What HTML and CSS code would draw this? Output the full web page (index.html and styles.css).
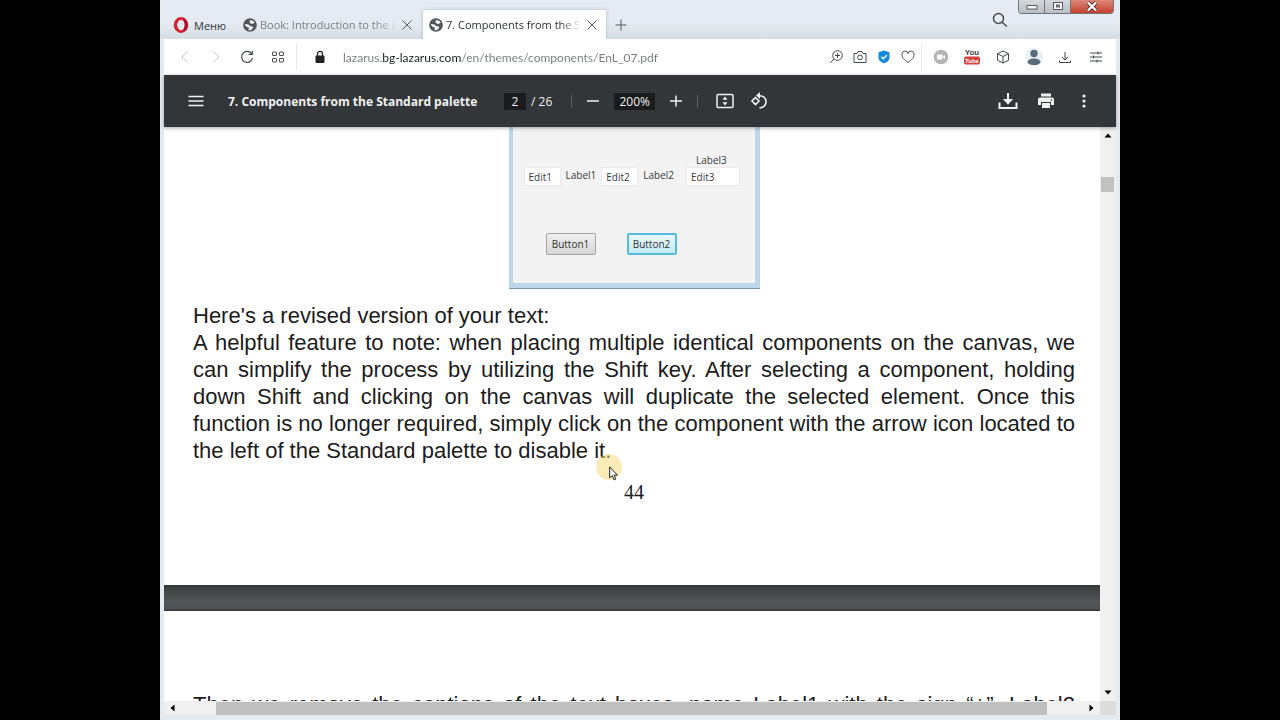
FILE: index.html
```html
<!DOCTYPE html>
<html lang="en">
<head>
  <meta charset="UTF-8">
  <meta name="viewport" content="width=device-width, initial-scale=1.0">
  <title>7. Components from the Standard palette</title>
  <link rel="stylesheet" href="styles.css">
</head>
<body>
  <div class="window">
    <header class="tab-bar">
      <button class="menu-button">
        <svg width="16" height="16" viewBox="0 0 16 16"><ellipse cx="8" cy="8" rx="5.6" ry="6.2" fill="none" stroke="#d3233a" stroke-width="3.4"/><ellipse cx="8" cy="8" rx="3.2" ry="5.2" fill="#e4ebf1"/><path d="M10 1a7 7.5 0 0 1 0 14c2-2 2.500-11 0-14z" fill="#a70f26"/></svg>
        Меню
      </button>
      <div class="tab">
        <svg class="globe" width="14" height="14" viewBox="0 0 14 14"><circle cx="7" cy="7" r="6.800" fill="#50565b"/><path d="M7 2.300c2-.6 4 .6 4.700 2.300L9.500 6 7.600 5.400 6.500 4zM2 6l3.500.5 1.800 1.700 2.400.3.500 1.200-2.400 2.500-2.600-.2 1-1.900-1.600-.8L2.500 8z" fill="#f4f6f8"/></svg>
        <a href="#" class="tab-title">Book: Introduction to the Lazarus</a>
        <button class="close" aria-label="Close tab"><svg width="10" height="10" viewBox="0 0 10 10"><path d="M.5.500l9 9M9.500.500l-9 9"/></svg></button>
      </div>
      <div class="tab active">
        <svg class="globe" width="14" height="14" viewBox="0 0 14 14"><circle cx="7" cy="7" r="6.800" fill="#50565b"/><path d="M7 2.300c2-.6 4 .6 4.700 2.300L9.500 6 7.600 5.400 6.500 4zM2 6l3.500.5 1.800 1.700 2.400.3.500 1.200-2.400 2.500-2.600-.2 1-1.900-1.600-.8L2.500 8z" fill="#fff"/></svg>
        <a href="#" class="tab-title">7. Components from the Standard</a>
        <button class="close" aria-label="Close tab"><svg width="10" height="10" viewBox="0 0 10 10"><path d="M.5.500l9 9M9.500.500l-9 9"/></svg></button>
      </div>
      <button class="new-tab" aria-label="New tab"><svg width="12" height="12" viewBox="0 0 12 12"><path d="M6 .5v11M.5 6h11"/></svg></button>
      <button class="search" aria-label="Search tabs"><svg width="16" height="16" viewBox="0 0 16 16"><circle cx="6.500" cy="6.500" r="5"/><path d="M10.200 10.200l4.600 4.300"/></svg></button>
      <div class="window-controls">
        <button aria-label="Minimize"><svg width="12" height="12" viewBox="0 0 12 12"><rect x="1" y="4.500" width="10" height="3.500" fill="#fff" stroke="#555a60"/></svg></button>
        <button aria-label="Maximize"><svg width="12" height="12" viewBox="0 0 12 12"><rect x="1.500" y="1.500" width="9" height="7" fill="#fff" stroke="#555a60"/><rect x="4.500" y="4" width="3" height="2" fill="#aaa" stroke="#555a60"/></svg></button>
        <button class="quit" aria-label="Close window"><svg width="12" height="12" viewBox="0 0 12 12"><path d="M2 1.500l8 8M10 1.500l-8 8" stroke="#5d2a28" stroke-width="4"/><path d="M2 1.500l8 8M10 1.500l-8 8" stroke="#fff" stroke-width="2.400"/></svg></button>
      </div>
    </header>

    <nav class="address-bar">
      <button class="disabled" aria-label="Back"><svg width="16" height="16" viewBox="0 0 16 16"><path d="M10.500 2.500L5 8l5.500 5.500"/></svg></button>
      <button class="disabled" aria-label="Forward"><svg width="16" height="16" viewBox="0 0 16 16"><path d="M5.500 2.500L11 8l-5.500 5.500"/></svg></button>
      <button aria-label="Reload"><svg width="16" height="16" viewBox="0 0 16 16"><path d="M12.800 5A5.500 5.500 0 1 0 13.500 9M13.300 1.800V5.500H9.500" stroke-width="1.200"/></svg></button>
      <button aria-label="Speed dial"><svg width="16" height="16" viewBox="0 0 16 16"><rect x="2.500" y="3" width="4" height="3.500" rx=".5"/><rect x="9.500" y="3" width="4" height="3.500" rx=".5"/><rect x="2.500" y="9.500" width="4" height="3.500" rx=".5"/><rect x="9.500" y="9.500" width="4" height="3.500" rx=".5"/></svg></button>
      <span class="divider"></span>
      <svg class="lock" width="12" height="14" viewBox="0 0 12 14"><path d="M3.500 6V4a2.500 2.700 0 0 1 5 0v2" stroke="#222" stroke-width="1.300" fill="none"/><rect x="1.500" y="5.500" width="9" height="7.500" rx="1" fill="#222"/></svg>
      <input class="url" type="text" aria-label="Address" value="lazarus.bg-lazarus.com/en/themes/components/EnL_07.pdf">
      <div class="page-actions">
        <button aria-label="Zoom"><svg width="16" height="16" viewBox="0 0 16 16"><circle cx="9.500" cy="6.500" r="4.800"/><path d="M6 10l-3.800 3.800M7 6.500h5M9.500 4v5"/></svg></button>
        <button aria-label="Snapshot"><svg width="16" height="16" viewBox="0 0 16 16"><path d="M2 4.500h3l1-2h4l1 2h3v9H2z"/><circle cx="8" cy="8.500" r="2.400"/></svg></button>
        <button aria-label="Ad blocker"><svg width="16" height="16" viewBox="0 0 16 16"><path d="M8 1.500l5.500 1.800V9c0 2.500-2.500 4-5.500 5.500C5 13 2.500 11.500 2.500 9V3.300z" fill="#1789dc" stroke="none"/><path d="M5.300 7.800l2 2 3.500-3.600" stroke="#fff" stroke-width="1.400"/></svg></button>
        <button aria-label="Bookmark"><svg width="16" height="16" viewBox="0 0 16 16"><path d="M8 13.500C4 10.500 2 8.500 2 5.700A3 3 0 0 1 8 4.500a3 3 0 0 1 6 1.200c0 2.800-2 4.800-6 7.800z"/></svg></button>
      </div>
      <div class="extensions">
        <button aria-label="Recorder"><svg width="16" height="16" viewBox="0 0 16 16"><circle cx="8" cy="8" r="7.300" fill="#b4b4b4" stroke="none"/><rect x="4" y="5.500" width="5.500" height="5" rx="1" fill="#fff" stroke="none"/><path d="M9.500 8L12 6v4z" fill="#fff" stroke="none"/></svg></button>
        <button aria-label="Video"><svg width="18" height="18" viewBox="0 0 18 18"><rect x="1" y="8.500" width="16" height="8" rx="2" fill="#d8403c" stroke="none"/><text class="logo-top" x="9" y="7" text-anchor="middle">You</text><text class="logo-bottom" x="9" y="15" text-anchor="middle">Tube</text></svg></button>
        <button aria-label="Extensions"><svg width="16" height="16" viewBox="0 0 16 16"><path d="M8 2l5.500 2.700v6.600L8 14l-5.500-2.700V4.700zM2.500 4.700L8 7.500l5.500-2.800M8 7.500V14"/></svg></button>
        <button aria-label="Profile"><svg width="18" height="18" viewBox="0 0 18 18"><circle cx="9" cy="9" r="9" fill="#e9f1f6" stroke="none"/><circle cx="9" cy="5.500" r="3.700" fill="#5a6b7c" stroke="none"/><path d="M2.500 14.500c0-2.500 3-4 6.500-4s6.500 1.500 6.500 4C14 16.500 12 17 9 17s-5-.5-6.500-2.500z" fill="#5a6b7c" stroke="none"/></svg></button>
        <button aria-label="Downloads"><svg width="16" height="16" viewBox="0 0 16 16"><path d="M8 3v8M5 8l3 3 3-3M2.500 11.500v2h11v-2"/></svg></button>
        <button aria-label="Easy setup"><svg width="16" height="16" viewBox="0 0 16 16"><path d="M2 4h12M2 8h12M2 12h12M10 2.500v3M5.500 6.500v3M9 10.500v3"/></svg></button>
      </div>
    </nav>

    <div class="pdf-toolbar">
      <button aria-label="Menu"><svg width="16" height="12" viewBox="0 0 16 12"><path d="M.5 1.500h15M.5 6h15M.5 10.500h15"/></svg></button>
      <h1>7. Components from the Standard palette</h1>
      <div class="pager">
        <input class="page-number" type="text" aria-label="Page number" value="2">
        <span>/ 26</span>
      </div>
      <span class="divider"></span>
      <button aria-label="Zoom out"><svg width="14" height="14" viewBox="0 0 14 14"><path d="M1 7h12"/></svg></button>
      <input class="zoom-level" type="text" aria-label="Zoom level" value="200%">
      <button aria-label="Zoom in"><svg width="14" height="14" viewBox="0 0 14 14"><path d="M1 7h12M7 1.500v11"/></svg></button>
      <span class="divider"></span>
      <div class="view-tools">
        <button aria-label="Fit to page"><svg width="18" height="16" viewBox="0 0 18 16"><rect x="1" y="1.500" width="16" height="13" rx="1"/><path d="M9 3.500L6.500 6.800h5zM9 12.500L6.500 9.200h5z" fill="#f1f1f1" stroke="none"/></svg></button>
        <button aria-label="Rotate"><svg width="18" height="18" viewBox="0 0 18 18"><path d="M5.500 5.500L9 9l-3.500 3.500L2 9zM8 3.500c5 0 8 2.500 8 6s-2.500 6-6.500 6.500" stroke-width="1.600"/><path d="M10 0v7L6 3.500z" fill="#f1f1f1" stroke="none"/></svg></button>
      </div>
      <div class="file-tools">
        <button aria-label="Download"><svg width="20" height="18" viewBox="0 0 20 18"><path d="M10 1v8M1.500 10.500v5.500h17v-5.500" stroke-width="2"/><path d="M4.800 7L10 12.500 15.200 7z" fill="#f1f1f1" stroke="none"/></svg></button>
        <button aria-label="Print"><svg width="18" height="16" viewBox="0 0 18 16"><path d="M4 .500h10v3H4zM3 4.500h12a2 2 0 0 1 2 2V12h-3V9H4v3H1V6.500a2 2 0 0 1 2-2zM5 10h8v5H5z" fill="#f1f1f1" stroke="none"/><circle cx="14.500" cy="7" r=".8" fill="#323639" stroke="none"/></svg></button>
        <button aria-label="More"><svg width="16" height="16" viewBox="0 0 16 16"><circle cx="8" cy="3" r="1.600"/><circle cx="8" cy="8" r="1.600"/><circle cx="8" cy="13" r="1.600"/></svg></button>
      </div>
    </div>

    <div class="viewer">
      <main class="pages">
        <section class="page first">
          <div class="form-preview">
            <div class="fields">
              <input class="field" type="text" aria-label="Edit1" value="Edit1">
              <label for="edit2">Label1</label>
              <input class="field" type="text" id="edit2" value="Edit2">
              <label for="edit3">Label2</label>
              <div class="stacked">
                <label for="edit3">Label3</label>
                <input class="field" type="text" id="edit3" value="Edit3">
              </div>
            </div>
            <div class="form-buttons">
              <button>Button1</button>
              <button class="focused">Button2</button>
            </div>
          </div>
          <p>Here's a revised version of your text:</p>
          <p>A helpful feature to note: when placing multiple identical components on the canvas, we can simplify the process by utilizing the Shift key. After selecting a component, holding down Shift and clicking on the canvas will duplicate the selected element. Once this function is no longer required, simply click on the component with the arrow icon located to the left of the Standard palette to disable it.</p>
          <div class="folio">44</div>
          <div class="pointer">
            <svg width="9" height="15" viewBox="0 0 9 15"><path d="M.7.900v11l2.600-2.300 1.700 4.300 1.800-.8-1.700-4h3.300z" fill="#fff" stroke="#222"/></svg>
          </div>
        </section>
        <section class="page second">
          <p>Then we remove the captions of the text boxes, name Label1 with the sign “+”, Label2<br></p>
        </section>
      </main>
      <div class="scroll-y">
        <svg width="8" height="5" viewBox="0 0 8 5"><path d="M4 .5L7.500 4.500h-7z"/></svg>
        <div class="thumb"></div>
        <svg class="end" width="8" height="5" viewBox="0 0 8 5"><path d="M4 4.500L.5.500h7z"/></svg>
      </div>
    </div>
    <div class="scroll-x">
      <svg width="5" height="8" viewBox="0 0 5 8"><path d="M.5 4L4.500.5v7z"/></svg>
      <div class="track"><div class="thumb"></div></div>
      <svg width="5" height="8" viewBox="0 0 5 8"><path d="M4.500 4L.5.500v7z"/></svg>
      <span class="corner"></span>
    </div>
  </div>
</body>
</html>
```

FILE: styles.css
```css
* {
  box-sizing: border-box;
}

body {
  margin: 0;
  background: #000;
  font-family: "Open Sans", "Noto Sans", sans-serif;
  font-size: 12px;
}

button {
  display: flex;
  align-items: center;
  justify-content: center;
  padding: 0;
  border: none;
  background: none;
  font: inherit;
}

input {
  border: none;
  outline: none;
  padding: 0;
  font: inherit;
}

svg {
  display: block;
  flex: none;
}

.window {
  display: flex;
  flex-direction: column;
  width: 75%;
  height: 100vh;
  margin: 0 auto;
  padding: 0 4px 5px;
  background: #e4ebf0;
  overflow: hidden;
}

/* tabs */
.tab-bar {
  display: flex;
  align-items: flex-end;
  flex: none;
  height: 39px;
  margin: 0 -4px;
  padding-left: 13px;
  background: linear-gradient(#e4ebf2 60%, #d5dde2);
}

.menu-button {
  gap: 5px;
  width: 64px;
  height: 28px;
  justify-content: flex-start;
  color: #33383c;
  font-size: 11px;
}

.tab {
  display: flex;
  align-items: center;
  width: 186px;
  height: 29px;
  padding: 0 8px 0 6px;
  gap: 3px;
}

.tab.active {
  width: 183px;
  padding-right: 6px;
  background: #fff;
  box-shadow: 0 0 3px rgba(90, 110, 130, 0.4);
  clip-path: inset(-3px -3px 0 -3px);
}

.tab-title {
  flex: 1;
  overflow: hidden;
  white-space: nowrap;
  color: #7c8288;
  font-size: 11px;
  text-decoration: none;
  -webkit-mask-image: linear-gradient(to right, #000 85%, transparent);
  mask-image: linear-gradient(to right, #000 85%, transparent);
}

.active .tab-title {
  color: #2e3235;
}

.close {
  width: 16px;
  height: 16px;
}

.tab-bar .close svg,
.new-tab svg,
.search svg {
  fill: none;
  stroke: #555b61;
}

.new-tab {
  width: 30px;
  height: 29px;
}

.search {
  align-self: center;
  width: 24px;
  height: 24px;
  margin-left: auto;
  margin-right: 6px;
}

.search svg {
  stroke: #444a50;
  stroke-width: 1.5;
}

.window-controls {
  display: flex;
  align-self: flex-start;
  height: 14px;
  margin-right: 6px;
  border: 1px solid #70757b;
  border-top: none;
  border-radius: 0 0 4px 4px;
  overflow: hidden;
}

.window-controls button {
  width: 26px;
  height: 13px;
  border-right: 1px solid #70757b;
  background: linear-gradient(#d6d9dc, #b9bec3);
}

.window-controls .quit {
  width: 42px;
  border: none;
  background: linear-gradient(#dc8a7c, #c8402e);
}

/* address row */
.address-bar {
  display: flex;
  align-items: center;
  flex: none;
  height: 36px;
  padding: 0 5px;
  background: #fff;
}

.address-bar button {
  width: 31px;
  height: 28px;
}

.address-bar button svg {
  fill: none;
  stroke: #44484c;
}

.address-bar .disabled svg {
  stroke: #c6c9cc;
}

.address-bar .divider {
  width: 1px;
  height: 26px;
  margin-left: 3px;
  background: #e6e8ea;
}

.lock {
  margin: 0 17px;
}

/* the domain is darker than the rest of the address */
.url {
  flex: 1;
  min-width: 0;
  height: 28px;
  font-family: Lato, sans-serif;
  background: linear-gradient(to right, #777b7f 40px, #1b1e20 40px, #1b1e20 118px, #777b7f 118px);
  -webkit-background-clip: text;
  background-clip: text;
  color: transparent;
}

.page-actions,
.extensions {
  display: flex;
  align-items: center;
}

.page-actions {
  padding-right: 1px;
  border-right: 1px solid #e6e8ea;
}

.page-actions button {
  width: 24px;
}

.extensions {
  padding-left: 3px;
}

.logo-top,
.logo-bottom {
  font: bold 8px "Liberation Sans", sans-serif;
  stroke: none;
  fill: #444;
}

.logo-bottom {
  font-size: 6px;
  fill: #fff;
}

/* pdf toolbar */
.pdf-toolbar {
  display: flex;
  align-items: center;
  flex: none;
  height: 52px;
  padding: 0 17px;
  background: #323639;
  color: #f1f1f1;
  position: relative;
  z-index: 1;
  box-shadow: 0 1px 4px rgba(0, 0, 0, 0.35);
}

.pdf-toolbar button {
  width: 30px;
  height: 30px;
}

.pdf-toolbar svg {
  fill: none;
  stroke: #f1f1f1;
  stroke-width: 1.5;
}

.pdf-toolbar h1 {
  width: 259px;
  margin: 0 0 0 17px;
  font-size: 12px;
  font-weight: 700;
  white-space: nowrap;
}

.pager {
  display: flex;
  align-items: center;
  gap: 5px;
  margin-left: 17px;
}

.page-number,
.zoom-level {
  width: 22px;
  height: 17px;
  background: #191b1c;
  color: #f1f1f1;
  text-align: center;
}

.zoom-level {
  width: 41px;
  margin: 0 6px;
}

.pdf-toolbar .divider {
  width: 1px;
  height: 13px;
  background: #5d6163;
}

.pager + .divider {
  margin-left: 19px;
  margin-right: 6px;
}

.view-tools {
  display: flex;
  gap: 4px;
  margin-left: 12px;
}

.zoom-level + button {
  margin-right: 6px;
}

.file-tools {
  display: flex;
  gap: 8px;
  margin-left: auto;
}

.file-tools button:last-child svg {
  fill: #f1f1f1;
  stroke: none;
}

/* document */
.viewer {
  display: flex;
  flex: 1;
  min-height: 0;
}

/* the dark band is the gap between the sheets */
.pages {
  display: flex;
  flex: 1;
  flex-direction: column;
  gap: 26px;
  overflow: hidden;
  background: linear-gradient(#303334 458px, #3a3e3d 460px, #525659 474px, #4b4f52 482px, #303334 484px);
}

.page {
  position: relative;
  padding: 0 25px 0 29px;
  background: #fff;
  color: #1c1c1c;
  font: 22px/27px "Liberation Sans", Arial, sans-serif;
}

.page p {
  margin: 0;
  text-align: justify;
}

.first {
  min-height: 458px;
}

.second {
  flex: 1;
  padding-top: 80px;
}

.second p {
  text-align-last: justify;
}

.folio {
  margin-top: 15px;
  text-align: center;
  font: 20px/27px "Liberation Serif", "Times New Roman", serif;
}

.form-preview {
  width: 251px;
  height: 161px;
  margin: 0 auto 14px;
  padding: 26px 15px 0 11px;
  border: solid #bcd6ea;
  border-width: 0 5px 5px 4px;
  box-shadow: inset 0 0 1px #fff, 0 1px 0 #7396ae;
  background: #f3f3f3;
  color: #3a3a3a;
  font: 10px/14px "Open Sans", sans-serif;
}

.fields {
  display: flex;
  align-items: flex-end;
  gap: 5px;
}

.fields > label {
  padding-bottom: 4px;
}

.stacked {
  display: flex;
  flex-direction: column;
  flex: 1;
  margin-left: 7px;
}

.stacked label {
  padding-left: 10px;
}

.field {
  width: 37px;
  height: 19px;
  padding-left: 4px;
  border: 1px solid #e9eaec;
  background: #fff;
  color: #3a3a3a;
}

.stacked .field {
  width: 100%;
}

.form-buttons {
  display: flex;
  gap: 31px;
  margin: 47px 0 0 22px;
}

.form-buttons button {
  width: 50px;
  height: 22px;
  border: 1px solid #a5a5a5;
  border-radius: 2px;
  background: linear-gradient(#f0f0f0, #d6d6d6);
  color: #333;
}

.form-buttons .focused {
  border: 2px solid #55bbdc;
  background: linear-gradient(#eaf8fd, #c4ebf8);
}

/* mouse pointer with its click highlight */
.pointer {
  position: absolute;
  top: 327px;
  left: 432px;
  width: 26px;
  height: 26px;
  padding: 12px 0 0 13px;
  border-radius: 50%;
  background: rgba(248, 215, 110, 0.5);
}

/* scrollbars */
.scroll-y {
  display: flex;
  flex-direction: column;
  align-items: center;
  width: 16px;
  padding: 6px 1px 6px 0;
  background: #f0f0f0;
}

.scroll-y .thumb {
  width: 13px;
  height: 15px;
  margin-top: 39px;
  background: #c1c1c1;
}

.scroll-y .end {
  margin-top: auto;
}

.scroll-x {
  display: flex;
  align-items: center;
  flex: none;
  height: 14px;
  padding-left: 6px;
  background: #f0f0f0;
}

.scroll-x .track {
  flex: 1;
  margin-right: 4px;
  padding: 0 4% 0 41px;
}

.scroll-x .thumb {
  height: 13px;
  background: #bfbfbf;
}

.corner {
  width: 16px;
  height: 14px;
  margin-left: 6px;
  background: #dcdcdc;
}
```
